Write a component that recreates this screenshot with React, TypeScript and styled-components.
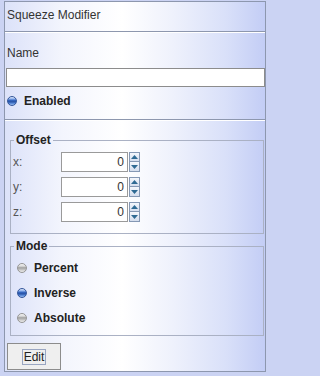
import React from "react";
import styled, { createGlobalStyle } from "styled-components";

const GlobalStyle = createGlobalStyle`
  * { box-sizing: border-box; }
  html, body {
    margin: 0;
    padding: 0;
    background: #cbd3f3;
  }
  body {
    font-family: "Liberation Sans", Arial, sans-serif;
    font-size: 12px;
    line-height: 14px;
    color: #2b2b2b;
  }
`;

const panelGradient = `linear-gradient(90deg, #dce2f9 0%, #f3f5fd 22%, #ffffff 45%, #eef1fc 65%, #d9e0f9 85%, #c3cdf5 100%)`;

const Frame = styled.div`
  width: 262px;
  height: 371px;
  margin: 1px 0 0 4px;
  border: 1px solid #8d97ae;
  background: ${panelGradient};
  display: flex;
  flex-direction: column;
`;

const TitleBar = styled.div`
  height: 30px;
  padding: 6px 2px 0;
  color: #333;
  border-bottom: 1px solid #8d97ae;
  box-shadow: 0 1px 0 #ffffff;
`;

const NameSection = styled.div`
  height: 88px;
  padding: 14px 0 0 0;
  display: flex;
  flex-direction: column;
  border-bottom: 1px solid #8d97ae;
  box-shadow: 0 1px 0 #ffffff;
`;

const Label = styled.div`
  padding-left: 2px;
  color: #333;
`;

const TextField = styled.input`
  display: block;
  width: 259px;
  height: 19px;
  margin: 8px 0 0 1px;
  padding: 0 3px;
  border: 1px solid #8c8c8c;
  background: #fff;
  font: inherit;
  outline: none;
`;

const RadioRow = styled.label<{ $indent: number; $top?: number }>`
  display: flex;
  align-items: center;
  gap: 7px;
  height: 20px;
  margin-top: ${(p) => p.$top ?? 0}px;
  padding-left: ${(p) => p.$indent}px;
  font-weight: bold;
  color: #222;
`;

const RadioDot = styled.span<{ $on?: boolean }>`
  display: inline-block;
  width: 10px;
  height: 10px;
  border-radius: 50%;
  border: 1px solid ${(p) => (p.$on ? "#35579a" : "#959595")};
  background: ${(p) =>
    p.$on
      ? "linear-gradient(180deg, #e4ecfb 0%, #93b5ee 22%, #3566c0 42%, #2853a6 60%, #5f8fdc 82%, #a3c2f2 100%)"
      : "linear-gradient(180deg, #f6f6f6 0%, #d8d8d8 28%, #a4a4a4 46%, #b4b4b4 62%, #dadada 84%, #ececec 100%)"};
`;

const GroupsArea = styled.div`
  height: 216px;
  padding: 13px 1px 0 5px;
  display: flex;
  flex-direction: column;
`;

const Group = styled.fieldset<{ $top: number; $bottom: number }>`
  margin: ${(p) => p.$top}px 0 0 0;
  padding: 5px 0 ${(p) => p.$bottom}px 2px;
  min-width: 0;
  border: 1px solid #aab1c4;
`;

const Legend = styled.legend`
  margin-left: 1px;
  padding: 0 2px;
  font-weight: bold;
  color: #222;
  line-height: 14px;
`;

const FieldGrid = styled.div`
  display: grid;
  grid-template-columns: 48px auto;
  grid-auto-rows: 20px;
  row-gap: 5px;
  align-items: center;
`;

const AxisLabel = styled.span`
  color: #555;
`;

const Spinner = styled.div`
  display: flex;
  height: 20px;
`;

const SpinField = styled.input`
  width: 67px;
  height: 20px;
  padding: 0 3px;
  border: 1px solid #9a9a9a;
  background: #fff;
  font: inherit;
  color: #333;
  text-align: right;
  outline: none;
`;

const SpinButtons = styled.div`
  display: flex;
  flex-direction: column;
  margin-left: 1px;
  width: 11px;
`;

const SpinButton = styled.button`
  display: flex;
  align-items: center;
  justify-content: center;
  width: 11px;
  height: 10px;
  padding: 0;
  border: 1px solid #8598b4;
  background: linear-gradient(180deg, #f4f7fc 0%, #d5deee 100%);
  & + & {
    border-top: none;
  }
`;

const Arrow = ({ up }: { up?: boolean }) => (
  <svg width="7" height="4" viewBox="0 0 7 4">
    <polygon
      points={up ? "0,4 3.5,0 7,4" : "0,0 3.5,4 7,0"}
      fill="#2f6a93"
    />
  </svg>
);

const ModeList = styled.div`
  display: flex;
  flex-direction: column;
  gap: 5px;
`;

const EditBar = styled.div`
  flex: 1;
  padding: 7px 0 0 2px;
`;

const EditButton = styled.button`
  display: flex;
  align-items: center;
  justify-content: center;
  width: 54px;
  height: 27px;
  padding: 0;
  border: 1px solid #8c8c8c;
  background: #efefef;
  font: inherit;
  color: #222;
`;

const FocusRing = styled.span`
  padding: 0 1px;
  line-height: 14px;
  border: 1px solid #9aa6c2;
`;

const SpinRow = ({ axis }: { axis: string }) => (
  <>
    <AxisLabel>{axis}:</AxisLabel>
    <Spinner>
      <SpinField defaultValue="0" />
      <SpinButtons>
        <SpinButton>
          <Arrow up />
        </SpinButton>
        <SpinButton>
          <Arrow />
        </SpinButton>
      </SpinButtons>
    </Spinner>
  </>
);

export default function App() {
  return (
    <>
      <GlobalStyle />
      <Frame>
        <TitleBar>Squeeze Modifier</TitleBar>
        <NameSection>
          <Label>Name</Label>
          <TextField />
          <RadioRow $indent={2} $top={4}>
            <RadioDot $on />
            Enabled
          </RadioRow>
        </NameSection>
        <GroupsArea>
          <Group $top={0} $bottom={11}>
            <Legend>Offset</Legend>
            <FieldGrid>
              <SpinRow axis="x" />
              <SpinRow axis="y" />
              <SpinRow axis="z" />
            </FieldGrid>
          </Group>
          <Group $top={5} $bottom={7}>
            <Legend>Mode</Legend>
            <ModeList>
              <RadioRow $indent={4}>
                <RadioDot />
                Percent
              </RadioRow>
              <RadioRow $indent={4}>
                <RadioDot $on />
                Inverse
              </RadioRow>
              <RadioRow $indent={4}>
                <RadioDot />
                Absolute
              </RadioRow>
            </ModeList>
          </Group>
        </GroupsArea>
        <EditBar>
          <EditButton>
            <FocusRing>Edit</FocusRing>
          </EditButton>
        </EditBar>
      </Frame>
    </>
  );
}
